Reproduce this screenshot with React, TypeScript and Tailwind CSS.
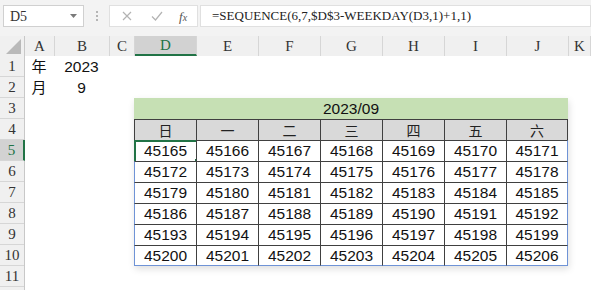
import React from 'react';

const serif = "font-['Liberation_Serif','Noto_Sans_CJK_TC',serif]";
const sans = "font-['Liberation_Sans','Noto_Sans_CJK_TC',sans-serif]";
const cjk = "font-['Noto_Sans_CJK_TC','Noto_Sans_CJK_SC',sans-serif]";

const columns = [
  { name: 'A', w: 'w-[30px]' },
  { name: 'B', w: 'w-[55px]' },
  { name: 'C', w: 'w-[25px]' },
  { name: 'D', w: 'w-[62px]' },
  { name: 'E', w: 'w-[62px]' },
  { name: 'F', w: 'w-[62px]' },
  { name: 'G', w: 'w-[62px]' },
  { name: 'H', w: 'w-[62px]' },
  { name: 'I', w: 'w-[62px]' },
  { name: 'J', w: 'w-[62px]' },
  { name: 'K', w: 'flex-1' },
];

const weekdays = ['日', '一', '二', '三', '四', '五', '六'];
const start = 45165;

const FormulaBar: React.FC = () => (
  <div className="h-[36px] shrink-0 bg-[#f3f3f3] flex items-start pt-[5px] pl-[3px]">
    {/* Name box */}
    <div className="w-[81px] h-[22px] bg-white border border-[#d0d0d0] flex items-center justify-between pl-[6px] pr-[6px]">
      <span className={`${serif} text-[14px] text-[#333]`}>D5</span>
      <svg width="7" height="4" viewBox="0 0 7 4">
        <path d="M0 0h7L3.5 4z" fill="#7a7a7a" />
      </svg>
    </div>
    <div className="w-[25px] h-[22px] flex flex-col items-center justify-center gap-[2px]">
      <span className="w-[2px] h-[2px] bg-[#b5b5b5]" />
      <span className="w-[2px] h-[2px] bg-[#b5b5b5]" />
      <span className="w-[2px] h-[2px] bg-[#b5b5b5]" />
    </div>
    {/* Cancel / enter / fx */}
    <div className="w-[89px] h-[22px] bg-white border border-[#e0e0e0] flex items-center">
      <svg className="ml-[12px]" width="10" height="10" viewBox="0 0 10 10">
        <path d="M1 1l8 8M9 1L1 9" stroke="#b3b3b3" strokeWidth="1.2" fill="none" />
      </svg>
      <svg className="ml-[19px]" width="12" height="10" viewBox="0 0 12 10">
        <path d="M1 5.5l3.5 3.5L11 1" stroke="#b3b3b3" strokeWidth="1.2" fill="none" />
      </svg>
      <span className={`${serif} ml-[16px] text-[13px] italic text-[#555] leading-none`}>
        f<span className="text-[10px]">x</span>
      </span>
    </div>
    <div className="ml-[2px] flex-1 h-[22px] bg-white border border-[#e0e0e0] flex items-center pl-[11px]">
      <span className={`${serif} text-[13px] text-[#222] whitespace-nowrap`}>
        =SEQUENCE(6,7,$D$3-WEEKDAY(D3,1)+1,1)
      </span>
    </div>
  </div>
);

const ColumnHeader: React.FC = () => (
  <div className="flex h-[20px] shrink-0 bg-[#f0f0f0]">
    <div className="w-[25px] h-[20px] border-r border-[#c8c8c8] relative">
      <svg className="absolute right-[3px] bottom-[2px]" width="15" height="15" viewBox="0 0 15 15">
        <path d="M15 0v15H0z" fill="#b9b9b9" />
      </svg>
    </div>
    {columns.map((c) => {
      const active = c.name === 'D';
      return (
        <div
          key={c.name}
          className={`${c.w} h-[20px] flex items-center justify-center border-r border-[#d6d6d6] ${serif} text-[15px] ${
            active ? 'bg-[#d2d2d2] border-b-2 border-b-[#217346] text-[#217346]' : 'text-[#333]'
          }`}
        >
          <span className="pt-[1px]">{c.name}</span>
        </div>
      );
    })}
  </div>
);

const RowHeaders: React.FC = () => (
  <div className="w-[25px] shrink-0 flex flex-col bg-[#f0f0f0] border-r border-[#c8c8c8]">
    {Array.from({ length: 11 }, (_, i) => i + 1).map((n) => {
      const active = n === 5;
      return (
        <div
          key={n}
          className={`h-[21px] shrink-0 flex items-center justify-center border-b border-[#d6d6d6] ${serif} text-[15px] ${
            active ? 'bg-[#d2d2d2] text-[#217346] border-r-2 border-r-[#217346] -mr-px' : 'text-[#333]'
          }`}
        >
          {n}
        </div>
      );
    })}
    <div className="flex-1" />
  </div>
);

const Calendar: React.FC = () => (
  <div className="col-start-4 col-span-7 row-start-3 row-span-8 grid grid-cols-[repeat(7,62px)] grid-rows-[repeat(8,21px)] shadow-[1px_3px_7px_rgba(0,0,0,0.13)]">
    <div className={`col-span-7 bg-[#c6e0b4] flex items-center justify-center ${sans} text-[15.5px] text-[#111]`}>
      2023/09
    </div>
    {weekdays.map((d, i) => (
      <div
        key={d}
        className={`bg-[#d9d9d9] border-t border-l border-[#404040] ${i === 6 ? 'border-r' : ''} flex items-center justify-center ${cjk} text-[14px] text-[#222]`}
      >
        {d}
      </div>
    ))}
    {Array.from({ length: 42 }, (_, i) => {
      const col = i % 7;
      const row = Math.floor(i / 7);
      return (
        <div
          key={i}
          className={`relative bg-white border-t border-[#404040] flex items-center justify-center ${sans} text-[15.5px] text-[#111]
            ${col === 0 ? 'border-l border-l-[#6f93d6]' : 'border-l border-l-[#404040]'}
            ${col === 6 ? 'border-r border-r-[#6f93d6]' : ''}
            ${row === 5 ? 'border-b border-b-[#6f93d6]' : ''}`}
        >
          {start + i}
          {i === 0 && (
            <>
              <div className="absolute -top-px -left-px w-[64px] h-[23px] border-2 border-[#217346]" />
              <div className="absolute -right-[4px] -bottom-[3px] w-[6px] h-[6px] bg-[#217346] border border-white" />
            </>
          )}
        </div>
      );
    })}
  </div>
);

const App: React.FC = () => {
  return (
    <div className="w-[591px] h-[290px] overflow-hidden bg-white flex flex-col">
      <FormulaBar />
      <ColumnHeader />
      <div className="flex flex-1 min-h-0">
        <RowHeaders />
        <div className="flex-1 grid grid-cols-[30px_55px_25px_repeat(7,62px)_1fr] auto-rows-[21px] content-start -ml-px">
          <div className={`${cjk} text-[15px] text-[#111] flex items-center justify-center`}>年</div>
          <div className={`${sans} text-[15.5px] text-[#111] flex items-center justify-center`}>2023</div>
          <div className="col-start-1 row-start-2 flex items-center justify-center">
            <span className={`${cjk} text-[15px] text-[#111]`}>月</span>
          </div>
          <div className={`col-start-2 row-start-2 ${sans} text-[15.5px] text-[#111] flex items-center justify-center`}>9</div>
          <Calendar />
        </div>
      </div>
    </div>
  );
};

export default App;
